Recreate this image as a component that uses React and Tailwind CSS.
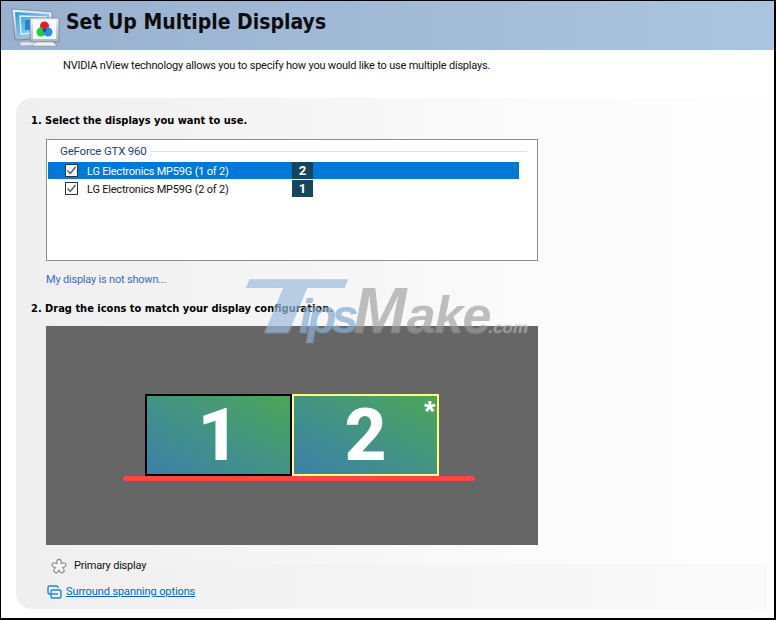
const rows = [
  { label: 'LG Electronics MP59G (1 of 2)', num: '2', selected: true },
  { label: 'LG Electronics MP59G (2 of 2)', num: '1', selected: false },
]

function AppIcon() {
  return (
    <svg width="50" height="44" viewBox="0 0 50 44" className="shrink-0">
      <defs>
        <linearGradient id="bigScreen" x1="0" y1="0" x2="1" y2="1">
          <stop offset="0" stopColor="#2f9be0" />
          <stop offset="1" stopColor="#bfe6f8" />
        </linearGradient>
        <linearGradient id="frame" x1="0" y1="0" x2="0" y2="1">
          <stop offset="0" stopColor="#eef2f6" />
          <stop offset="1" stopColor="#a9b6c4" />
        </linearGradient>
      </defs>
      <path d="M2 5 L42 8 L42 34 L5 36 Z" fill="url(#frame)" stroke="#5c6b7c" strokeWidth="0.6" />
      <path d="M5 8 L39 10 L39 31 L7 33 Z" fill="url(#bigScreen)" />
      <path d="M10 12 L36 13 L36 28 L11 30 Z" fill="none" stroke="#d6f1fb" strokeWidth="1.5" />
      <path d="M15 16 L32 16 L32 25 L15 26 Z" fill="#1f86d2" />
      <path d="M10 38 L36 37 L40 41 L10 42 Z" fill="#dfe5ea" stroke="#7d8996" strokeWidth="0.5" />
      <rect x="20" y="14" width="29" height="24" rx="1" fill="url(#frame)" stroke="#5c6b7c" strokeWidth="0.6" />
      <rect x="23" y="16" width="23" height="19" fill="#f5fbff" />
      <circle cx="34.5" cy="22" r="4.5" fill="#f01820" />
      <circle cx="31" cy="28" r="4.5" fill="#20d030" />
      <circle cx="38" cy="28" r="4.5" fill="#2a8be8" />
      <circle cx="34.5" cy="26" r="2" fill="#6a2a90" />
      <path d="M26 38 L43 38 L47 42 L22 42 Z" fill="#eef1f4" stroke="#7d8996" strokeWidth="0.5" />
    </svg>
  )
}

function CheckBox({ selected }) {
  return (
    <span className={`w-[13px] h-[13px] border border-[#333333] flex items-center justify-center ${selected ? 'bg-[#f2f2f2]' : 'bg-white'}`}>
      <svg width="11" height="11" viewBox="0 0 11 11">
        <path d="M1.5 5.5 L4.2 8.5 L9.5 2" fill="none" stroke="#555555" strokeWidth="1.3" />
      </svg>
    </span>
  )
}

function Display({ num, active, star }) {
  return (
    <div className={`relative w-[147px] h-[82px] border-2 flex items-center justify-center bg-gradient-to-tr from-[#3d7ea9] to-[#4da652] ${active ? 'border-[#ffff80]' : 'border-black'}`}>
      <span className="text-white font-extrabold text-[73px] leading-none font-['Roboto',sans-serif]">{num}</span>
      {star && <span className="absolute top-[1px] right-[2px] text-white font-bold text-[29px] leading-[29px] font-['Liberation_Sans',sans-serif]">*</span>}
    </div>
  )
}

const starLobes = ['M8 8.5 L8 3.5', 'M8 8.5 L12.76 6.95', 'M8 8.5 L10.94 12.55', 'M8 8.5 L5.06 12.55', 'M8 8.5 L3.24 6.95']

export default function App() {
  return (
    <div className="relative w-[776px] h-[620px] bg-white border-t border-l border-r-2 border-b-2 border-black overflow-hidden font-['Roboto',sans-serif] text-[11px] tracking-[-0.2px] text-[#111111]">
      <div className="h-[49px] flex items-center gap-[6px] pl-[9px] bg-gradient-to-r from-[#98b1cf] to-[#abc4df]">
        <AppIcon />
        <h1 className="font-['DejaVu_Sans_Condensed','DejaVu_Sans',sans-serif] tracking-normal font-bold text-[21px] leading-none text-[#0d0d0d] mb-[6px]">Set Up Multiple Displays</h1>
      </div>

      <p className="ml-[62px] mt-[7px] h-[17px] leading-[17px]">NVIDIA nView technology allows you to specify how you would like to use multiple displays.</p>

      <div className="ml-[15px] mt-[24px] w-[751px] h-[511px] rounded-l-[16px] pt-[15px] pl-[15px] [background:linear-gradient(to_right,#efefef,#fafafa)_bottom/100%_45px_no-repeat,linear-gradient(to_right,#efefef,#fbfbfb_70%,#fefefe)]">
        <h2 className="h-[16px] leading-[16px] font-['DejaVu_Sans_Condensed','DejaVu_Sans',sans-serif] tracking-normal font-bold text-[11px] text-black">1. Select the displays you want to use.</h2>

        <div className="mt-[10px] ml-[15px] w-[492px] h-[122px] border border-[#8c8c8c] bg-white pt-[3px] pl-[1px]">
          <div className="flex items-center h-[17px] pl-[12px] pr-[10px] gap-[4px]">
            <span className="text-[#1f3f77] text-[11.5px] leading-[17px]">GeForce GTX 960</span>
            <span className="flex-1 h-px bg-[#d9e1f2]" />
          </div>
          <div className="mt-[2px] w-[471px] flex flex-col gap-px">
            {rows.map((row) => (
              <div key={row.num} className={`flex items-center h-[17px] ${row.selected ? 'bg-[#0078d7] text-white' : 'text-[#111111]'}`}>
                <span className="ml-[17px] mr-[9px]"><CheckBox selected={row.selected} /></span>
                <span className="w-[205px] mt-[2px] leading-[17px]">{row.label}</span>
                <span className="w-[21px] h-[17px] bg-[#15475c] text-white font-['Roboto',sans-serif] font-bold text-[13px] leading-[17px] text-center">{row.num}</span>
              </div>
            ))}
          </div>
        </div>

        <a className="block mt-[10px] ml-[15px] h-[17px] leading-[17px] text-[#3a6cc0]">My display is not shown...</a>

        <h2 className="mt-[13px] h-[16px] leading-[16px] font-['DejaVu_Sans_Condensed','DejaVu_Sans',sans-serif] tracking-normal font-bold text-[11px] text-black">2. Drag the icons to match your display configuration.</h2>

        <div className="mt-[9px] ml-[15px] w-[492px] h-[219px] bg-[#666666] flex flex-col items-center pt-[68px]">
          <div className="flex">
            <Display num="1" />
            <Display num="2" active star />
          </div>
          <div className="ml-[14px] w-[352px] h-[5px] rounded-full bg-[#ff4444]" />
        </div>

        <div className="mt-[12px] ml-[20px] flex items-center gap-[7px] h-[17px]">
          <svg width="16" height="16" viewBox="0 0 16 16" fill="none" strokeLinecap="round">
            {starLobes.map((d) => <path key={d} d={d} stroke="#8a8a8a" strokeWidth="5.4" />)}
            {starLobes.map((d) => <path key={d} d={d} stroke="#f6f6f6" strokeWidth="3.2" />)}
          </svg>
          <span className="leading-[17px]">Primary display</span>
        </div>

        <div className="mt-[9px] ml-[16px] flex items-center gap-[4px] h-[17px]">
          <svg width="15" height="14" viewBox="0 0 15 14" fill="none" stroke="#1e86d6" strokeWidth="1.4">
            <path d="M11 3 V2.5 A1.5 1.5 0 0 0 9.5 1 H2.5 A1.5 1.5 0 0 0 1 2.5 V7.5 A1.5 1.5 0 0 0 2.5 9 H3.5" />
            <rect x="4" y="5" width="10" height="8" rx="1.5" />
            <path d="M4 9 H11" />
          </svg>
          <a className="text-[#0066cc] underline leading-[17px] tracking-[-0.1px]">Surround spanning options</a>
        </div>
      </div>

      {/* watermark sits on top of the panel */}
      <div className="absolute left-[233px] top-[266px] h-[66px] flex items-baseline italic font-bold font-['Liberation_Sans',sans-serif] tracking-normal leading-none pointer-events-none [text-shadow:0_0_1px_rgba(255,255,255,0.55)]">
        <span className="inline-block w-[65px] text-[78px] origin-left scale-x-[2.15] text-[rgba(40,110,180,0.32)]">T</span>
        <span className="text-[48px] tracking-[-5px] text-[rgba(40,110,180,0.42)]">ips</span>
        <span className="text-[64px] text-[rgba(0,0,0,0.25)]">M</span>
        <span className="text-[52px] tracking-[-1px] text-[rgba(0,0,0,0.25)]">ake</span>
        <span className="-ml-[2px] text-[17px] text-[rgba(0,0,0,0.15)]">.com</span>
      </div>
    </div>
  )
}
